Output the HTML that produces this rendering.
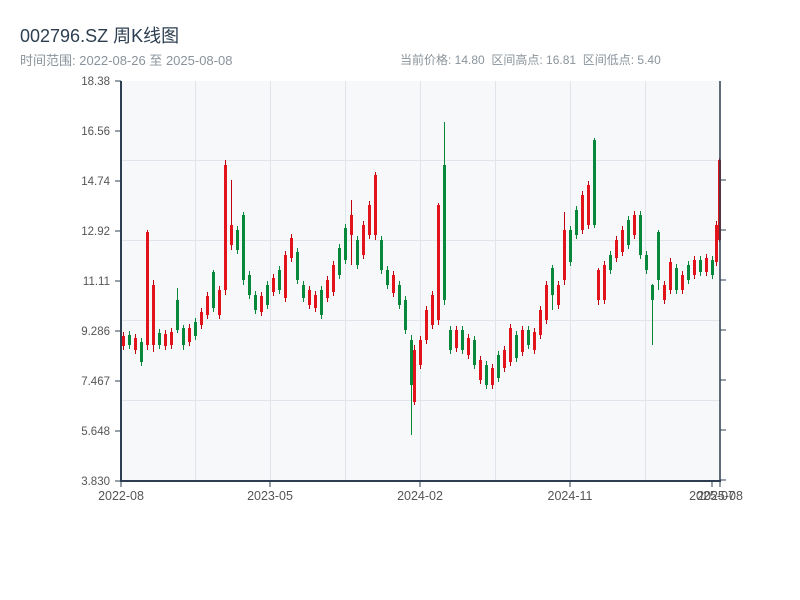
<!DOCTYPE html>
<html><head><meta charset="utf-8"><style>
body{margin:0;background:#fff;width:800px;height:600px;overflow:hidden;font-family:"Liberation Sans","Noto Sans CJK SC",sans-serif;}
.t{position:absolute;left:20px;top:22px;font-size:18px;color:#2c3e50;}
.s{position:absolute;top:50px;font-size:13px;color:#8a939b;}
svg{position:absolute;left:0;top:0}
</style></head><body>
<div class="t">002796.SZ 周K线图</div>
<div class="s" style="left:20px">时间范围: 2022-08-26 至 2025-08-08</div>
<div class="s" style="left:400px;font-size:12px;top:51px;word-spacing:0">当前价格: 14.80&nbsp; 区间高点: 16.81&nbsp; 区间低点: 5.40</div>
<svg width="800" height="600" xmlns="http://www.w3.org/2000/svg" font-family="Liberation Sans, sans-serif" font-size="11" fill="#555">
<rect x="121" y="81" width="599" height="400" fill="#f7f8fa"/>
<g stroke="#e1e4ea" stroke-width="1">
<line x1="195.5" y1="81" x2="195.5" y2="481"/><line x1="270.5" y1="81" x2="270.5" y2="481"/><line x1="345.5" y1="81" x2="345.5" y2="481"/><line x1="420.5" y1="81" x2="420.5" y2="481"/><line x1="495.5" y1="81" x2="495.5" y2="481"/><line x1="570.5" y1="81" x2="570.5" y2="481"/><line x1="645.5" y1="81" x2="645.5" y2="481"/>
<line x1="121" y1="160.5" x2="720" y2="160.5"/><line x1="121" y1="240.5" x2="720" y2="240.5"/><line x1="121" y1="320.5" x2="720" y2="320.5"/><line x1="121" y1="400.5" x2="720" y2="400.5"/>
</g>
<path fill="none" stroke="#c0000f" stroke-width="1" d="M123.5 332V350M135.5 334V354M147.5 230V350M153.5 280V352M165.5 330V350M171.5 328V349M189.5 324V346M201.5 308V329M207.5 292V319M219.5 286V319M225.5 160V295M231.5 180V250M261.5 292V316M273.5 274V296M285.5 251V302M291.5 234V262M309.5 286V309M315.5 291V312M327.5 276V302M333.5 261V296M351.5 200V265M363.5 221V259M369.5 201V239M375.5 172V240M393.5 271V297M414.5 345V405M420.5 336V369M426.5 306V344M432.5 291V329M438.5 203V325M456.5 326V352M468.5 334V359M480.5 356V384M492.5 364V389M504.5 346V372M510.5 324V366M522.5 326V356M534.5 328V354M540.5 306V339M546.5 281V324M558.5 281V309M564.5 212V285M582.5 191V234M588.5 181V229M598.5 268V305M604.5 261V304M616.5 236V262M622.5 226V256M634.5 211V239M664.5 281V304M670.5 258V294M682.5 271V294M694.5 256V279M706.5 254V276M716.5 221V266M719.5 158V242"/>
<path fill="none" stroke="#e3131b" stroke-width="3" d="M123.5 336V346M135.5 338V350M147.5 232V345M153.5 285V345M165.5 334V346M171.5 332V345M189.5 328V342M201.5 312V325M207.5 296V315M219.5 290V315M225.5 165V290M231.5 225V245M261.5 296V312M273.5 278V292M285.5 255V298M291.5 238V258M309.5 290V305M315.5 295V308M327.5 280V298M333.5 265V292M351.5 215V235M363.5 225V255M369.5 205V235M375.5 175V235M393.5 275V293M414.5 350V402M420.5 340V365M426.5 310V340M432.5 295V325M438.5 205V320M456.5 330V348M468.5 338V355M480.5 360V380M492.5 368V385M504.5 350V368M510.5 328V362M522.5 330V352M534.5 332V350M540.5 310V335M546.5 285V320M558.5 285V305M564.5 230V280M582.5 195V230M588.5 185V225M598.5 270V300M604.5 265V300M616.5 240V258M622.5 230V252M634.5 215V235M664.5 285V300M670.5 262V290M682.5 275V290M694.5 260V275M706.5 258V272M716.5 225V262M719.5 160V240"/>
<path fill="none" stroke="#07883a" stroke-width="1" d="M129.5 331V349M141.5 338V366M159.5 329V349M177.5 288V333M183.5 325V350M195.5 318V340M213.5 270V312M237.5 226V254M243.5 212V285M249.5 271V299M255.5 291V314M267.5 281V309M279.5 266V294M297.5 248V284M303.5 281V302M321.5 286V319M339.5 244V279M345.5 224V264M357.5 236V269M381.5 236V274M387.5 266V289M399.5 281V309M405.5 296V334M411.5 335V435M444.5 122V305M450.5 326V354M462.5 326V354M474.5 336V369M486.5 361V389M498.5 351V382M516.5 331V362M528.5 326V349M552.5 265V310M570.5 226V266M576.5 206V239M594.5 138V228M610.5 251V274M628.5 216V249M640.5 211V259M646.5 251V274M652.5 284V345M658.5 230V290M676.5 264V294M688.5 261V284M700.5 256V276M712.5 256V279"/>
<path fill="none" stroke="#07883a" stroke-width="3" d="M129.5 335V345M141.5 342V362M159.5 333V345M177.5 300V330M183.5 328V345M195.5 322V336M213.5 272V308M237.5 230V250M243.5 215V280M249.5 275V295M255.5 295V310M267.5 285V305M279.5 270V290M297.5 252V280M303.5 285V298M321.5 290V315M339.5 248V275M345.5 228V260M357.5 240V265M381.5 240V270M387.5 270V285M399.5 285V305M405.5 300V330M411.5 340V385M444.5 165V300M450.5 330V350M462.5 330V350M474.5 340V365M486.5 365V385M498.5 355V378M516.5 335V358M528.5 330V345M552.5 268V295M570.5 230V262M576.5 210V235M594.5 140V225M610.5 255V270M628.5 220V245M640.5 215V255M646.5 255V270M652.5 285V300M658.5 232V280M676.5 268V290M688.5 265V280M700.5 260V272M712.5 260V275"/>
<g stroke="#2c3e50">
<line x1="121" y1="81" x2="121" y2="482" stroke-width="2"/>
<line x1="120" y1="481" x2="721" y2="481" stroke-width="2"/>
<line x1="720" y1="81" x2="720" y2="482" stroke-width="1.5"/>
<line x1="115" y1="81" x2="121" y2="81"/><line x1="115" y1="131" x2="121" y2="131"/><line x1="115" y1="181" x2="121" y2="181"/><line x1="115" y1="231" x2="121" y2="231"/><line x1="115" y1="281" x2="121" y2="281"/><line x1="115" y1="331" x2="121" y2="331"/><line x1="115" y1="381" x2="121" y2="381"/><line x1="115" y1="431" x2="121" y2="431"/><line x1="115" y1="481" x2="121" y2="481"/>
<line x1="720" y1="180" x2="726" y2="180"/><line x1="720" y1="230" x2="726" y2="230"/><line x1="720" y1="280" x2="726" y2="280"/><line x1="720" y1="330" x2="726" y2="330"/><line x1="720" y1="380" x2="726" y2="380"/><line x1="720" y1="430" x2="726" y2="430"/><line x1="720" y1="480" x2="726" y2="480"/>
<line x1="121" y1="481" x2="121" y2="487"/><line x1="270" y1="481" x2="270" y2="487"/><line x1="420" y1="481" x2="420" y2="487"/><line x1="570" y1="481" x2="570" y2="487"/><line x1="712" y1="481" x2="712" y2="487"/><line x1="720" y1="481" x2="720" y2="487"/>
</g>
<g text-anchor="end" font-size="11.5">
<text x="110" y="85">18.38</text><text x="110" y="135">16.56</text><text x="110" y="185">14.74</text><text x="110" y="235">12.92</text><text x="110" y="285">11.11</text><text x="110" y="335">9.286</text><text x="110" y="385">7.467</text><text x="110" y="435">5.648</text><text x="110" y="485">3.830</text>
</g>
<g text-anchor="middle" font-size="12.5">
<text x="121" y="500">2022-08</text><text x="270" y="500">2023-05</text><text x="420" y="500">2024-02</text><text x="570" y="500">2024-11</text><text x="712" y="500">2025-07</text><text x="720" y="500">2025-08</text>
</g>
</svg>
</body></html>
